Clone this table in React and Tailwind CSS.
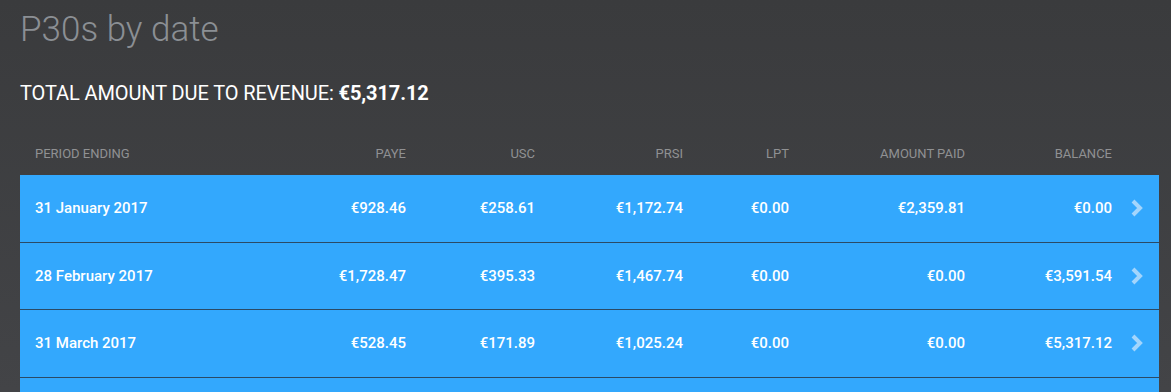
const rows = [
  { period: '31 January 2017', paye: '€928.46', usc: '€258.61', prsi: '€1,172.74', lpt: '€0.00', paid: '€2,359.81', balance: '€0.00' },
  { period: '28 February 2017', paye: '€1,728.47', usc: '€395.33', prsi: '€1,467.74', lpt: '€0.00', paid: '€0.00', balance: '€3,591.54' },
  { period: '31 March 2017', paye: '€528.45', usc: '€171.89', prsi: '€1,025.24', lpt: '€0.00', paid: '€0.00', balance: '€5,317.12' },
];

const grid = 'grid grid-cols-[241px_130px_129px_148px_106px_176px_147px_1fr] items-center pl-[15px]';

function Chevron() {
  return (
    <svg width="14" height="18" viewBox="0 0 14 18" className="ml-[18px]">
      <polyline points="3,2 10,9 3,16" fill="none" stroke="#a3d5fc" strokeWidth="4" strokeLinejoin="miter" />
    </svg>
  );
}

export default function App() {
  return (
    <div className="w-[1171px] h-[392px] overflow-hidden bg-gradient-to-b from-[#3a3b3d] to-[#434447] font-['Roboto',sans-serif]">
      {/* heading */}
      <h1 className="pl-[20px] pt-[9px] text-[35px] leading-[42px] font-light text-[#8b8f94]">P30s by date</h1>
      <div className="pl-[20px] mt-[30px] text-[20px] leading-[24px] tracking-[-0.1px] text-white">
        TOTAL AMOUNT DUE TO REVENUE: <span className="font-bold">€5,317.12</span>
      </div>

      <div className="mt-[27px] w-[1139px] ml-[20px]">
        {/* column headers */}
        <div className={`${grid} h-[43px] text-[13px] text-[#909193] uppercase`}>
          <div>Period ending</div>
          <div className="text-right">PAYE</div>
          <div className="text-right">USC</div>
          <div className="text-right">PRSI</div>
          <div className="text-right">LPT</div>
          <div className="text-right">Amount paid</div>
          <div className="text-right">Balance</div>
          <div />
        </div>

        {rows.map((r) => (
          <div key={r.period} className={`${grid} h-[67.5px] bg-[#33a8fd] border-b border-[#2b4a66] text-[15px] font-medium text-white`}>
            <div>{r.period}</div>
            <div className="text-right">{r.paye}</div>
            <div className="text-right">{r.usc}</div>
            <div className="text-right">{r.prsi}</div>
            <div className="text-right">{r.lpt}</div>
            <div className="text-right">{r.paid}</div>
            <div className="text-right">{r.balance}</div>
            <div className="flex items-center">
              <Chevron />
            </div>
          </div>
        ))}
        {/* next row, below the fold */}
        <div className="h-[67.5px] bg-[#33a8fd]" />
      </div>
    </div>
  );
}
